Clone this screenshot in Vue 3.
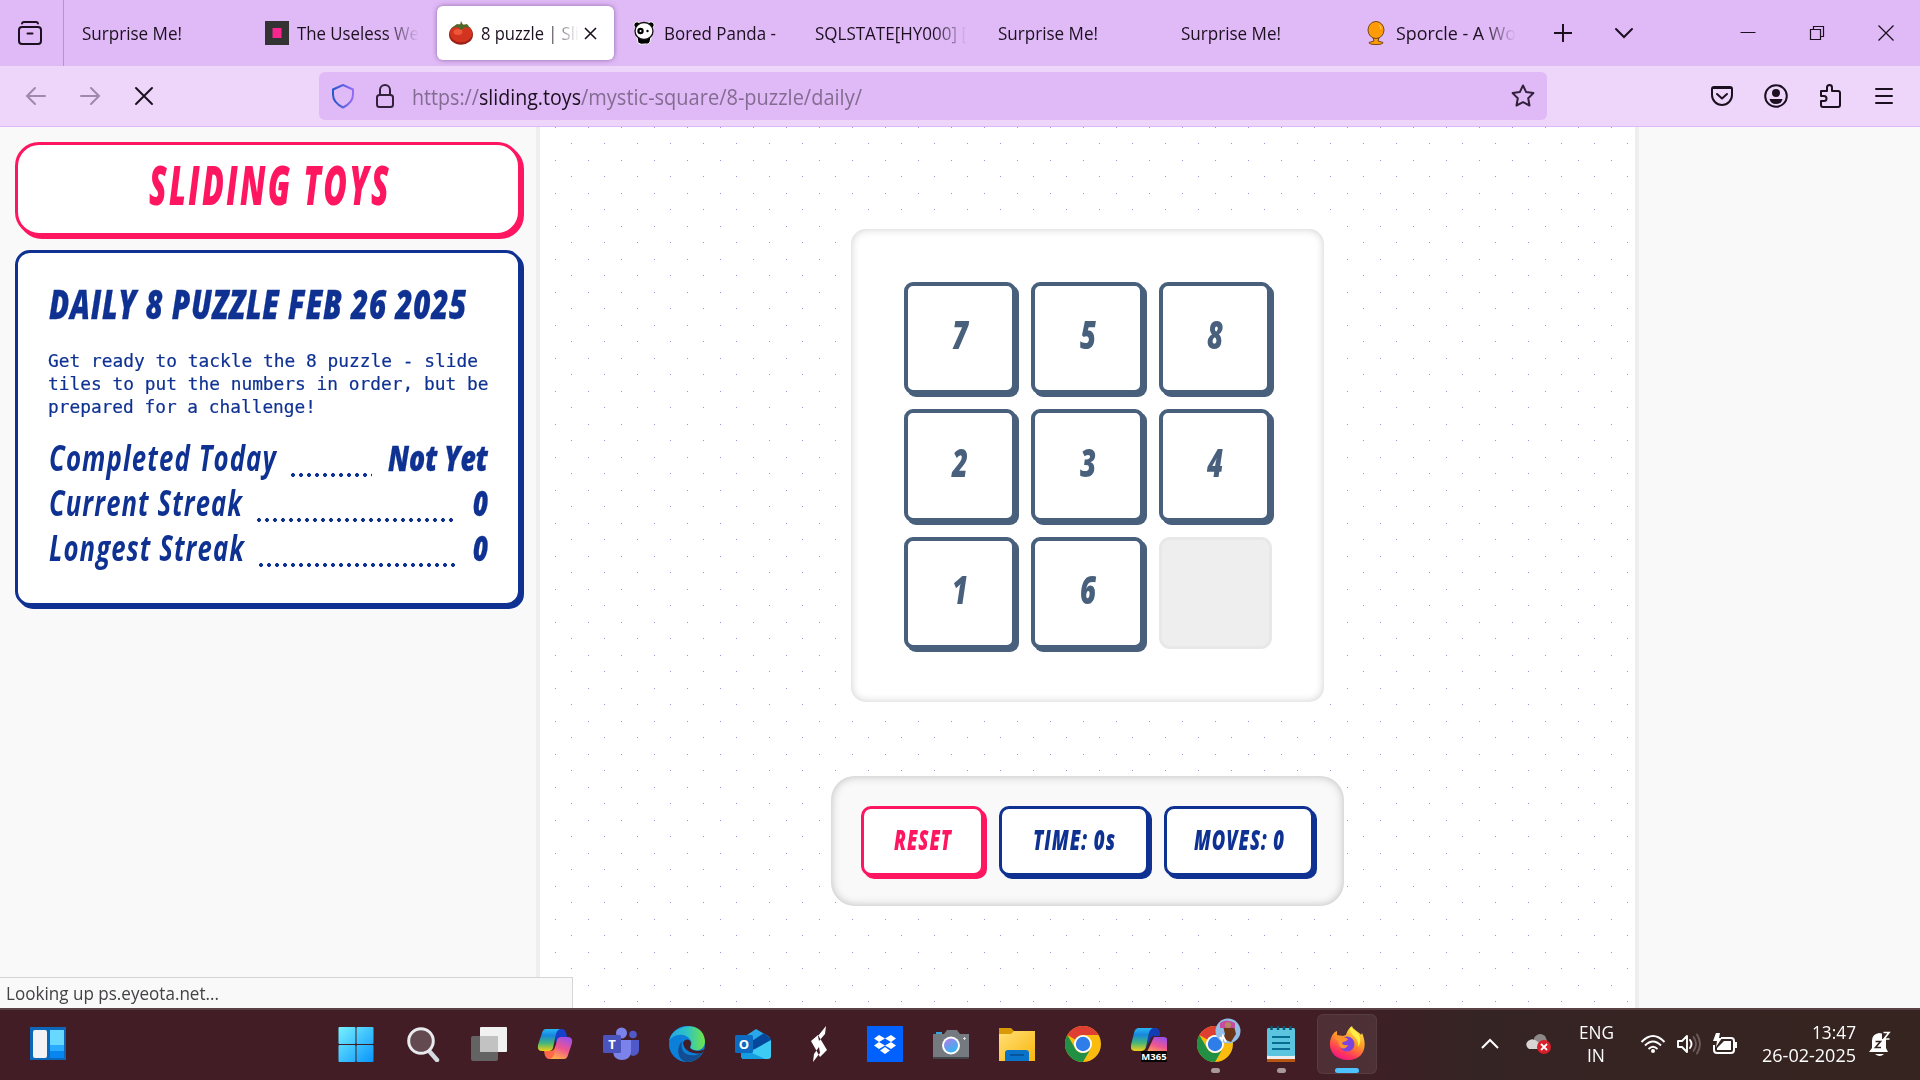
<script setup>
const tabs = [
  { title: 'Surprise Me!', width: 100 },
  { title: 'The Useless We', width: 122, icon: 'useless', fade: true },
  { title: '8 puzzle | Sli', width: 98, icon: 'tomato', active: true, fade: true },
  { title: 'Bored Panda -', width: 112, icon: 'panda' },
  { title: 'SQLSTATE[HY000] [', width: 152, fade: true },
  { title: 'Surprise Me!', width: 100 },
  { title: 'Surprise Me!', width: 100 },
  { title: 'Sporcle - A Wo', width: 120, icon: 'sporcle', fade: true },
]
const copy = [
  { text: 'Get ready to tackle the 8 puzzle - slide', width: 430 },
  { text: 'tiles to put the numbers in order, but be', width: 440.5 },
  { text: 'prepared for a challenge!', width: 268 },
]
const stats = [
  { label: 'Completed Today', width: 228, value: 'Not Yet', valueWidth: 100 },
  { label: 'Current Streak', width: 194, value: '0', valueWidth: 15 },
  { label: 'Longest Streak', width: 196, value: '0', valueWidth: 15 },
]
const tiles = [7, 5, 8, 2, 3, 4, 1, 6, null]
const apps = ['start', 'search', 'taskview', 'copilot', 'teams', 'edge', 'outlook', 'ess', 'dropbox', 'camera', 'explorer', 'chrome', 'm365', 'chrome2', 'notepad', 'firefox']

// Condenses a run of text horizontally to the given width in pixels.
const vFit = {
  mounted(el, { value }) {
    const natural = el.getBoundingClientRect().width
    el.style.transform = `scaleX(${value / natural})`
    el.style.marginRight = `${value - natural}px`
  },
}
</script>

<template>
  <div class="screen">
    <header class="tabbar">
      <div class="library">
        <svg width="24" height="24" viewBox="0 0 24 24" fill="none" stroke="#1c1020" stroke-width="2" stroke-linecap="round"><path d="M4 2.500Q4.300 1 6 1h12q1.700 0 2 1.500" /><rect x="1" y="6" width="22" height="17" rx="3" /><path d="M9.500 12.500h5" /></svg>
      </div>
      <div class="tabs">
        <div v-for="(t, i) in tabs" :key="i" class="tab" :class="{ active: t.active }">
          <svg v-if="t.icon === 'useless'" class="fav" viewBox="0 0 24 24"><path fill="#333" d="M0 0h24v24H0z" /><path fill="#f9268f" d="M7.500 7h9v10h-9z" /></svg>
          <svg v-if="t.icon === 'tomato'" class="fav" viewBox="0 0 24 24"><ellipse cx="12" cy="13.500" rx="12" ry="10.300" fill="#9c2115" /><ellipse cx="12" cy="12.500" rx="11" ry="8.800" fill="#d2341f" /><ellipse cx="9" cy="11" rx="4.500" ry="3" fill="#ee573a" /><path d="m3 7 5-4 3 1 1-4 2 4 4-1 3 4-5-1-4 3-3-3z" fill="#4b6a2a" /></svg>
          <svg v-if="t.icon === 'panda'" class="fav" viewBox="0 0 24 24"><g stroke="#fff"><circle cx="5" cy="4" r="3.200" /><circle cx="19" cy="4" r="3.200" /><path d="M5 16h14l-1 5q-1 3-5 2-4 1-7-1z" /></g><ellipse cx="12" cy="10" rx="9" ry="8.500" fill="#fff" stroke="#111" stroke-width="1.300" /><circle cx="8.500" cy="10" r="3.200" /><circle cx="8.500" cy="10" r="1" fill="#fff" /><circle cx="15.500" cy="10" r="1.200" /></svg>
          <svg v-if="t.icon === 'sporcle'" class="fav" viewBox="0 0 24 24"><path d="M9 17h6l-1 3 5 1.500q0 2-7 2t-7-2L10 20z" fill="#ff9c05" stroke="#754719" /><ellipse cx="12" cy="9" rx="8" ry="8.500" fill="#ff9c05" stroke="#754719" /><path d="M15 4q2 1 2 4" fill="none" stroke="#ffd070" /></svg>
          <span class="label" :class="{ fade: t.fade }"><span v-fit="t.width" class="fit">{{ t.title }}</span></span>
          <svg v-if="t.active" class="tabclose" width="13" height="13" viewBox="0 0 13 13" stroke="#1c1020" stroke-width="1.600"><path d="m1 1 11 11M12 1 1 12" /></svg>
        </div>
      </div>
      <svg class="plus" width="18" height="18" viewBox="0 0 18 18" stroke="#1c1020" stroke-width="2"><path d="M9 0v18M0 9h18" /></svg>
      <svg class="chev" width="20" height="12" viewBox="0 0 20 12" fill="none" stroke="#1c1020" stroke-width="2" stroke-linecap="round"><path d="m2 2 8 8 8-8" /></svg>
      <div class="winctl">
        <svg width="16" height="16" viewBox="0 0 16 16"><path d="M.5 7.500h15" stroke="#1c1020" /></svg>
        <svg width="16" height="16" viewBox="0 0 16 16" fill="none" stroke="#1c1020" stroke-width="1.200"><path d="M1.500 4.500h10v10h-10zM4.500 4.500v-3h10v10h-3" /></svg>
        <svg width="16" height="16" viewBox="0 0 16 16" stroke="#1c1020" stroke-width="1.300"><path d="m.5.5 15 15M15.500.5l-15 15" /></svg>
      </div>
    </header>

    <nav class="toolbar">
      <div class="navbtns">
        <svg width="22" height="20" viewBox="0 0 22 20" fill="none" stroke="#9d8aa9" stroke-width="2" stroke-linecap="round"><path d="M20 10H2M10 2l-8 8 8 8" /></svg>
        <svg width="22" height="20" viewBox="0 0 22 20" fill="none" stroke="#9d8aa9" stroke-width="2" stroke-linecap="round"><path d="M2 10h18M12 2l8 8-8 8" /></svg>
        <svg class="stop" width="20" height="20" viewBox="0 0 20 20" stroke="#1c1020" stroke-width="2" stroke-linecap="round"><path d="m2 2 16 16M18 2 2 18" /></svg>
      </div>
      <div class="urlbar">
        <svg width="24" height="26" viewBox="0 0 24 26" fill="none" stroke="url(#shield)" stroke-width="2"><path d="m12 2 10 4.500v5c0 6-4 10-10 13-6-3-10-7-10-13v-5z" stroke-linejoin="round" /></svg>
        <svg class="lock" width="20" height="26" viewBox="0 0 20 26" fill="none" stroke="#33213c" stroke-width="2"><rect x="2" y="12" width="16" height="12" rx="2.500" /><path d="M5 12V7a5 5 0 0 1 10 0v5" /></svg>
        <div class="url"><span v-fit="67" class="fit">https://</span><span v-fit="102" class="fit host">sliding.toys</span><span v-fit="281" class="fit">/mystic-square/8-puzzle/daily/</span></div>
        <svg class="star" width="24" height="24" viewBox="0 0 24 24" fill="none" stroke="#33213c" stroke-width="2" stroke-linejoin="round"><path d="m12 1.500 3.200 6.600 7.200 1-5.200 5.100 1.300 7.300-6.500-3.400-6.500 3.400 1.300-7.300L1.600 9.100l7.200-1z" /></svg>
      </div>
      <div class="tools">
        <svg width="24" height="24" viewBox="0 0 24 24" fill="none" stroke="#1c1020" stroke-width="2" stroke-linecap="round" stroke-linejoin="round"><path d="M4 3h16q2 0 2 2v6a10 10 0 0 1-20 0V5q0-2 2-2zM7 10l5 4.500 5-4.500" /><path d="M3 4h18" /></svg>
        <svg width="24" height="24" viewBox="0 0 24 24"><circle cx="12" cy="12" r="10.800" fill="none" stroke="#1c1020" stroke-width="2" /><circle cx="12" cy="9" r="4" fill="#1c1020" /><path d="M5.500 15h13q-1 5-6.500 5t-6.500-5z" fill="#1c1020" /></svg>
        <svg width="24" height="24" viewBox="0 0 24 24" fill="none" stroke="#1c1020" stroke-width="2" stroke-linejoin="round"><path d="M3 7h6V3.500a2.500 2.500 0 0 1 5 0V7h6q2 0 2 2v12q0 2-2 2H5q-2 0-2-2v-4h3a2.500 2.500 0 0 0 0-5H3z" /></svg>
        <svg width="24" height="24" viewBox="0 0 24 24" stroke="#1c1020" stroke-width="2" stroke-linecap="round"><path d="M4 5h16M4 12h16M4 19h16" /></svg>
      </div>
    </nav>

    <div class="page">
      <aside class="side">
        <div class="card brand"><span v-fit="242" class="fit toy">SLIDING TOYS</span></div>
        <section class="card daily">
          <h1><span v-fit="418" class="fit toy">DAILY 8 PUZZLE FEB 26 2025</span></h1>
          <p><span v-for="c in copy" :key="c.text" class="line"><span v-fit="c.width" class="fit">{{ c.text }}</span></span></p>
          <div class="stats">
            <div v-for="s in stats" :key="s.label" class="stat">
              <span v-fit="s.width" class="fit toy name">{{ s.label }}</span><i class="leader"></i><span v-fit="s.valueWidth" class="fit toy val">{{ s.value }}</span>
            </div>
          </div>
        </section>
      </aside>
      <main class="main">
        <div class="board">
          <div v-for="(n, i) in tiles" :key="i" class="tile" :class="{ empty: n === null }"><span v-if="n !== null" v-fit="16" class="fit toy">{{ n }}</span></div>
        </div>
        <div class="controls">
          <button class="btn reset"><span v-fit="58" class="fit toy">RESET</span></button>
          <button class="btn"><span v-fit="83" class="fit toy">TIME: 0s</span></button>
          <button class="btn"><span v-fit="91" class="fit toy">MOVES: 0</span></button>
        </div>
      </main>
      <div class="status"><span v-fit="213" class="fit">Looking up ps.eyeota.net...</span></div>
    </div>

    <footer class="taskbar">
      <svg class="widgets" width="36" height="36" viewBox="0 0 36 36"><path fill="#0c67b8" d="M0 1h36v33H0z" /><rect x="3" y="4" width="14" height="28" rx="2" fill="#f3f3f5" /><path fill="#67d8ff" d="M20 4h14v15H20z" /><path fill="#29abff" d="M20 19h14v6H20z" /><path fill="#0786f0" d="M20 25h14v7H20z" /></svg>
      <div class="apps">
        <div v-for="a in apps" :key="a" class="slot" :class="a">
          <svg class="app" width="36" height="36" viewBox="0 0 36 36">
            <g v-if="a === 'start'" fill="url(#win)"><rect x=".5" y="1" width="17" height="17" rx="1" /><rect x="18.500" y="1" width="17" height="17" rx="1" /><rect x=".5" y="19" width="17" height="17" rx="1" /><rect x="18.500" y="19" width="17" height="17" rx="1" /></g>
            <g v-if="a === 'search'"><path d="m25 26 7 8" stroke="#d5d9e0" stroke-width="4.500" stroke-linecap="round" /><circle cx="16" cy="15" r="12.300" fill="#634a50" stroke="#e8eaee" stroke-width="3" /></g>
            <g v-if="a === 'taskview'"><rect x="0" y="10" width="27" height="25" rx="2" fill="#636363" /><rect x="9" y="1" width="27" height="25" rx="1" fill="#f1f1f1" /><path d="M9 10h18v16H9z" fill="#c3c2c2" /></g>
            <g v-if="a === 'copilot'"><path d="M18 3h7q4 0 5 8h-6q-3 0-4 4l-1 4z" fill="#1741c9" /><path d="M18 33h-6q-4 0-5-8h6q4 0 5-4l2-5z" fill="#ff6949" /><path d="M9 3h14q-3 1-4 5l-3 14q-1 3-4 3H5q-5 0-4-6L5 7q1-4 4-4z" fill="url(#cpA)" /><path d="M27 33H13q3-1 4-5l3-14q1-3 4-3h7q5 0 4 6l-4 12q-1 4-4 4z" fill="url(#cpB)" /></g>
            <g v-if="a === 'teams'"><circle cx="18.500" cy="7" r="5.500" fill="#7b83eb" /><circle cx="30" cy="8.500" r="3.800" fill="#5059c9" /><path d="M25 14h11v10q0 5-6 6-5-1-5-5z" fill="#5059c9" /><path d="M11 14h17v12q-1 8-9 8t-9-8z" fill="#7b83eb" /><rect y="9" width="18" height="18" rx="1.500" fill="#4b53bc" /><text x="9" y="23" class="glyph">T</text></g>
            <g v-if="a === 'edge'"><circle cx="18" cy="18" r="18" fill="#0c80d8" /><path d="M0 16C1-1 34-8 36 15c0 9-8 11-13 8-4-2 1-3-1-8C17 5 2 8 0 16z" fill="url(#edge)" /><path d="M13 15c-3 12 7 18 20 12-4 7-11 9-16 9-9-3-10-14-4-21z" fill="#124c91" /><path d="M14 17c1-4 7-5 8 0 0 3-2 4 0 6 3 2 8 3 14 0l-3 4c-9 2-18-2-19-10z" fill="#421d25" /></g>
            <g v-if="a === 'outlook'"><path d="M6 13 21 3l12 7q3 2 3 5L20 25 6 24z" fill="#28a8ea" /><path d="m17 15 12-8 7 6v4L18 25z" fill="#04489b" /><path d="m20 23 16-9v16q0 3-3 3H9q-3 0-3-4l14-6z" fill="#3dcaf3" /><path d="m6 22 24 11H9q-3 0-3-4z" fill="#149ee1" /><rect y="9" width="18" height="18" rx="1.500" fill="#0c6bc1" /><text x="9" y="23" class="glyph">O</text></g>
            <g v-if="a === 'ess'" fill="#fff"><path d="m25 0-1 8-6 7-1-5zM12 36l1-8 5-7 1 6zM17 9l-7 6 9 16 7-7z" /></g>
            <g v-if="a === 'dropbox'"><path fill="#0061fe" d="M0 0h36v36H0z" /><path fill="#fff" d="m12 9 6 3.500-6 3.500-5-3.500zM24 9l5 3.500-5 3.500-6-3.500zM12 16l6 3.500-6 3.500-5-3.500zM24 16l5 3.500-5 3.500-6-3.500zM18 21l5 3.500-5 3.500-5-3.500z" /></g>
            <g v-if="a === 'camera'"><path d="M3 6h6v4H3z" fill="#2da5df" /><path d="M2 8h9l3-4h10l3 4h9v25H0V8z" fill="#747a80" /><path d="M0 31h36v2H0z" fill="#40464c" /><circle cx="18" cy="19.500" r="9" fill="#fff" /><circle cx="18" cy="19.500" r="7" fill="url(#lens)" /><path d="M30 12.500h3M31.500 11v3" stroke="#ddd" /></g>
            <g v-if="a === 'explorer'"><path d="M0 2h12l4 4v4H0z" fill="#d99a05" /><path d="M0 8h12l3-3h21v30H0z" fill="url(#folder)" /><path d="M6 35V27q0-3 3-3h18q3 0 3 3v8z" fill="#0873c8" /><path d="M11 29h14" stroke="#064a8c" stroke-width="1.500" /></g>
            <g v-if="a === 'chrome' || a === 'chrome2'"><circle cx="18" cy="18" r="18" fill="#fbbc10" /><path d="M2.400 9A18 18 0 0 1 33.600 9H18a9 9 0 0 0-7.800 4.500z" fill="#df3e32" /><path d="M2.400 9A18 18 0 0 0 18 36l7.800-13.500A9 9 0 0 1 10.200 22.500z" fill="#229044" /><circle cx="18" cy="18" r="9" fill="#fff" /><circle cx="18" cy="18" r="7.200" fill="#2f7de9" /></g>
            <g v-if="a === 'm365'"><path d="M19 2h6q4 0 4 8h-6q-3 0-4 4l-4 8z" fill="#123cb5" /><path d="M8 2h14q-3 1-4 5l-3 14q-1 4-5 4H4q-5 0-4-6L3 7q1-5 5-5z" fill="url(#cpA)" /><path d="M23 11h10q4 0 3 5v12H15z" fill="url(#cpB)" /><rect x="10" y="25" width="26" height="11" rx="1" fill="#050505" /><text x="23" y="33.500" class="glyph small">M365</text></g>
            <g v-if="a === 'notepad'"><path d="M4 31h28v5H4z" fill="#b85510" /><path d="M4 28h28v5H4z" fill="#eee" /><rect x="4" y="2" width="28" height="28" rx="1.500" fill="#5bc5e0" /><path d="M9 11h18M9 17h18M9 23h18" stroke="#086b91" stroke-width="2" /><path d="M8.500 0v4M15 0v4M21 0v4M27.500 0v4" stroke="#075772" stroke-width="2.500" /></g>
            <g v-if="a === 'firefox'"><path d="M2 12c1-3 3-6 6-7v4l6 1 3-1c1-4 3-7 6-9 1 4 8 6 9 9l1-2c6 13 2 27-14 27C5 34-2 23 2 12z" fill="url(#fox)" /><circle cx="18" cy="18" r="7.500" fill="#7b43df" /><path d="M5 12c3-4 11-1 14 1-1 3-5 2-6 4 1 3 4 2 6 2-2 5-8 4-9 0-1-3 0-4-5-7z" fill="#ff922c" /><path d="M21 1c-1 9 10 10 8 20 5-7 2-14-8-20z" fill="#fff047" /></g>
          </svg>
          <svg v-if="a === 'chrome2'" class="avatar" width="26" height="26" viewBox="0 0 26 26"><circle cx="13" cy="13" r="12.500" fill="#91bfe8" /><path d="M8 8h11l2 8-5 8-8-3 2-5z" fill="#6b3517" /><path d="M5 5q6-5 15 0v5H5z" fill="#c64c9d" /><circle cx="13" cy="7" r="3" fill="#b88665" /><path d="m5 19 2 3 1-4 3 6" stroke="#fff" fill="none" stroke-width="2" /></svg>
          <i v-if="['chrome2', 'notepad', 'firefox'].includes(a)" class="run"></i>
        </div>
      </div>
      <div class="tray">
        <svg class="up" width="18" height="12" viewBox="0 0 18 12" fill="none" stroke="#fff" stroke-width="2"><path d="m1 10 8-8 8 8" /></svg>
        <svg class="cloud" width="26" height="22" viewBox="0 0 26 22"><path d="M8 5q5-7 11-2 2 3 2 8L9 15z" fill="#8e8988" /><path d="M3 16q-5-4-1-8 5-4 10 1l5 3-4 4z" fill="#d8d5d4" /><circle cx="18" cy="14" r="7" fill="#d81f2a" /><path d="m15 11 6 6M21 11l-6 6" stroke="#fff" stroke-width="1.800" /></svg>
        <div class="lang"><span v-fit="35" class="fit">ENG</span><span v-fit="18" class="fit">IN</span></div>
        <svg class="wifi" width="26" height="20" viewBox="0 0 26 20" fill="none" stroke="#fff" stroke-width="1.900"><path d="M1.500 8q11.500-12 23 0M5 11.500q8-8 16 0M8.500 15q4.500-4.500 9 0" /><circle cx="13" cy="17" r="2" fill="#fff" stroke="none" /></svg>
        <svg class="vol" width="26" height="22" viewBox="0 0 26 22" fill="none" stroke="#fff" stroke-width="1.900" stroke-linecap="round" stroke-linejoin="round"><path d="M2 8v6h4l5 5V3L6 8zM14 7q3 4 0 8" /><path d="M17.500 4q5 7 0 14M21 1.500q6 9.500 0 19" stroke="#6b5c5a" /></svg>
        <svg class="bat" width="26" height="22" viewBox="0 0 26 22"><path d="M9 5h10q3 0 3 3v9q0 3-3 3H5q-3 0-3-3v-5" fill="none" stroke="#fff" stroke-width="2" /><path d="M12 8h7v9H5v-2zM23 9h2v6h-2zM4 0 1 8h4l-1 6 6-9H7l1-5z" fill="#fff" /></svg>
        <div class="clock"><span v-fit="44" class="fit">13:47</span><span v-fit="94" class="fit">26-02-2025</span></div>
        <svg class="bell" width="24" height="26" viewBox="0 0 24 26"><path d="M4 17V10q0-7 7-8l3 .5V8h4v9l2 4H1zM7 23h9q-4 4-9 0z" fill="#fff" /><path d="M7.500 10.500h5l-5 6h5.500" fill="none" stroke="#33231f" stroke-width="1.600" /><path d="M15.500 1.500h5.500l-5 6.500h5.500" fill="none" stroke="#fff" stroke-width="1.700" /></svg>
      </div>
    </footer>

    <svg class="defs" width="0" height="0">
      <defs>
        <linearGradient id="shield"><stop stop-color="#2458cc" /><stop offset="1" stop-color="#946cf5" /></linearGradient>
        <linearGradient id="win" gradientUnits="userSpaceOnUse" x1="0" y1="0" x2="36" y2="36"><stop stop-color="#79f3ff" /><stop offset="1" stop-color="#0794fb" /></linearGradient>
        <linearGradient id="cpA" x2="0" y2="1"><stop stop-color="#28b5f4" /><stop offset=".3" stop-color="#1687dd" /><stop offset=".65" stop-color="#45b777" /><stop offset="1" stop-color="#f4cf15" /></linearGradient>
        <linearGradient id="cpB" x1=".7" x2=".3" y2="1"><stop stop-color="#9b50e8" /><stop offset=".5" stop-color="#ee5590" /><stop offset="1" stop-color="#ffad48" /></linearGradient>
        <linearGradient id="edge"><stop stop-color="#22a7e5" /><stop offset=".5" stop-color="#2fc3c5" /><stop offset="1" stop-color="#70e546" /></linearGradient>
        <linearGradient id="lens" x2=".6" y2="1"><stop stop-color="#b57be5" /><stop offset="1" stop-color="#31b5f2" /></linearGradient>
        <linearGradient id="folder" x2="1" y2="1"><stop stop-color="#ffe078" /><stop offset="1" stop-color="#f9b60c" /></linearGradient>
        <linearGradient id="fox" x1=".8" x2=".3" y2="1"><stop stop-color="#fff04c" /><stop offset=".45" stop-color="#ff9625" /><stop offset=".8" stop-color="#ff365b" /><stop offset="1" stop-color="#ed158a" /></linearGradient>
      </defs>
    </svg>
  </div>
</template>

<style>
body { margin: 0; overflow: hidden; }
</style>

<style scoped>
* { box-sizing: border-box; }
svg { display: block; flex: none; }
.defs { position: absolute; }
.screen { width: 1920px; height: 1080px; display: flex; flex-direction: column; overflow: hidden; font: 18px "Open Sans", "Noto Sans", sans-serif; color: #1c1020; }
.fit { display: inline-block; flex: none; white-space: nowrap; transform-origin: 0 50%; }
.toy { font-weight: 800; font-style: italic; }

.tabbar { height: 66px; background: #e0baf7; display: flex; align-items: center; flex: none; }
.library { width: 64px; height: 66px; padding-left: 18px; border-right: 1px solid #b495c6; display: flex; align-items: center; }
.tabs { display: flex; margin-left: 6px; }
.tab { width: 183.2px; height: 54px; padding-left: 12px; display: flex; align-items: center; }
.tab.active { width: 177px; margin: 0 5.6px 0 .6px; padding-left: 12px; background: #fff; border-radius: 6px; box-shadow: 0 0 5px rgba(90, 50, 110, .6); }
.fav { width: 24px; height: 24px; margin-right: 8px; }
.label { overflow: hidden; line-height: 30px; }
.fade { mask-image: linear-gradient(90deg, #000 calc(100% - 34px), transparent); }
.tabclose { margin-left: 5px; }
.plus { margin-left: 18px; }
.chev { margin-left: 42px; }
.winctl { display: flex; gap: 53px; margin-left: auto; margin-right: 26px; }

.toolbar { height: 61px; background: #edd6fa; border-bottom: 1px solid #dfb9f6; display: flex; align-items: center; flex: none; }
.navbtns { display: flex; align-items: center; gap: 32px; width: 319px; padding-left: 25px; }
.stop { margin-left: 1px; }
.urlbar { width: 1228px; height: 48px; background: #e0baf7; border-radius: 6px; display: flex; align-items: center; padding: 0 12px; }
.lock { margin-left: 20px; }
.url { display: flex; margin-left: 17px; padding-top: 2px; font-size: 21px; line-height: 32px; color: #836c91; }
.host { color: #1c1020; }
.star { margin-left: auto; }
.tools { display: flex; gap: 30px; margin-left: auto; margin-right: 24px; }

.page { height: 881px; flex: none; display: flex; position: relative; background: #f9f9f9; }
.side { width: 540px; flex: none; border-right: 4px solid #eee; padding: 15px; }
.card { width: 506px; background: #fff; border: 3px solid; }
.brand { height: 94px; color: #ff1660; border-radius: 24px; box-shadow: 3px 3px #ff1660; display: flex; align-items: center; justify-content: center; padding: 0 0 10px 3px; font-size: 54.5px; line-height: 60px; letter-spacing: 4px; }
.daily { height: 356px; margin-top: 14px; padding: 25px 30px 0; color: #0e3192; border-radius: 15px; box-shadow: 3px 3px #0e3192; }
h1 { margin: 0 0 21px 1px; height: 50px; font-size: 41px; line-height: 50px; letter-spacing: 1px; }
h1 .toy, .val { -webkit-text-stroke: .3px; }
p { margin: 0; font: 18px/23.2px "DejaVu Sans Mono", monospace; -webkit-text-stroke: .2px; }
.line { display: block; height: 23.2px; }
.stats { margin-top: 16px; }
.stat { display: flex; height: 45px; font-size: 35px; line-height: 45px; padding-left: 1px; }
.name { font-weight: 700; letter-spacing: 1.5px; }
.leader { flex: 1; align-self: flex-end; margin: 0 16px 3px 14px; height: 4px; background: radial-gradient(circle at 2px 2px, #0e3192 1.700px, transparent 2.200px) 0 0 / 8px 4px; }
.main { width: 1099px; flex: none; padding-top: 101.8px; border-right: 4px solid #eee; display: flex; flex-direction: column; align-items: center; background-color: #fff; background-image: radial-gradient(circle at 15.500px .5px, #9a92e0 .6px, transparent .7px), radial-gradient(circle at 31.500px 16.500px, #9a92e0 .6px, transparent .7px); background-size: 33px 33px; background-clip: padding-box; }
.board { width: 473.5px; height: 473.5px; padding: 53px; border-radius: 15px; background: #fff; display: grid; grid-template-columns: repeat(3, 112.5px); grid-template-rows: repeat(3, 112.5px); gap: 15px; box-shadow: inset 0 0 9px rgba(0, 0, 0, .2), 0 0 0 8px #fff; }
.tile { border: 4px solid #48607c; border-radius: 9px; box-shadow: 3px 3px #48607c; background: #fff; color: #48607c; display: flex; align-items: center; justify-content: center; padding-bottom: 8px; font-size: 39px; line-height: 44px; }
.empty { border: 3px solid #e8e8e8; background: #eee; box-shadow: none; border-radius: 11px; margin-right: -1px; }
.controls { margin-top: 73.7px; height: 130px; padding: 30px; display: flex; gap: 15px; border-radius: 24px; background: #f9f9f9; box-shadow: inset 0 0 10px rgba(0, 0, 0, .25); }
.btn { width: 150px; height: 70px; border: 3px solid; border-radius: 10px; background: #fff; color: #0e3192; box-shadow: 3px 3px #0e3192; display: flex; align-items: center; justify-content: center; padding: 0 0 4px; font: 29px/34px "Open Sans", sans-serif; letter-spacing: 1.5px; }
.reset { width: 123px; color: #ff1660; box-shadow: 3px 3px #ff1660; }
.status { position: absolute; left: 0; bottom: 0; width: 573px; height: 31px; background: #f9f9f9; border: solid #d5d5d5; border-width: 1px 1px 0 0; padding-left: 6px; color: #454245; line-height: 31px; }

.taskbar { height: 72px; flex: none; border-top: 2px solid #5b4244; background: linear-gradient(90deg, #421d25 0, #421d25 1300px, #352424 1480px, #35241f 100%); display: flex; align-items: center; color: #fff; }
.taskbar > * { margin-bottom: 2px; }
.widgets { margin-left: 30px; }
.apps { display: flex; margin-left: 258px; }
.slot { width: 66px; height: 60px; display: flex; align-items: center; justify-content: center; position: relative; }
.start .app { margin-right: 2px; }
.firefox { width: 60px; margin: 0 3px; background: rgba(255, 255, 255, .08); border: 1px solid rgba(255, 255, 255, .06); border-radius: 6px; }
.run { position: absolute; bottom: 1px; width: 9px; height: 5px; border-radius: 3px; background: #a8989c; }
.firefox .run { width: 24px; background: #4cc2ff; bottom: 0; }
.avatar { position: absolute; left: 33px; top: 4px; }
.glyph { fill: #fff; font-family: "Open Sans", sans-serif; font-weight: 700; font-size: 13px; text-anchor: middle; }
.small { font-size: 9.500px; }
.tray { display: flex; align-items: center; margin-left: auto; height: 70px; }
.cloud { margin-left: 27px; }
.lang { display: flex; flex-direction: column; align-items: center; line-height: 23.500px; width: 36px; margin: 0 26px; }
.vol { margin-left: 10px; }
.bat { margin-left: 10px; }
.clock { display: flex; flex-direction: column; width: 94px; align-items: flex-end; line-height: 23.500px; margin: 0 12px 0 24px; }
.bell { margin-right: 28px; }
</style>
